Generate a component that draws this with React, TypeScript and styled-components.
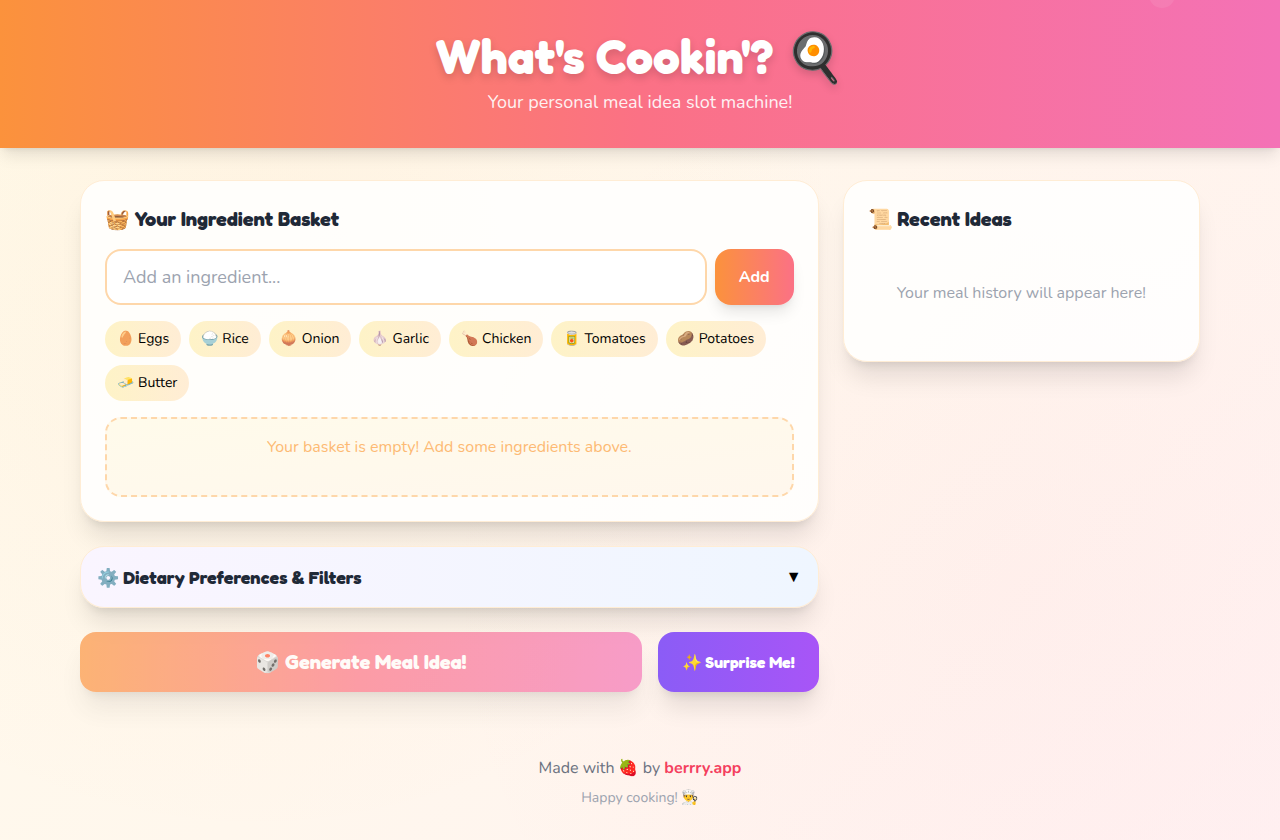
import React, { useState } from "react";
import styled, { createGlobalStyle } from "styled-components";

const display = `"Fredoka One", Fredoka, "Baloo 2", Nunito, sans-serif`;
const body = `Nunito, "Noto Sans", sans-serif`;

const shadowLg = "0 10px 15px -3px rgba(0, 0, 0, 0.1), 0 4px 6px -4px rgba(0, 0, 0, 0.1)";
const shadowXl = "0 20px 25px -5px rgba(0, 0, 0, 0.1), 0 8px 10px -6px rgba(0, 0, 0, 0.1)";

const GlobalStyle = createGlobalStyle`
  *, *::before, *::after { box-sizing: border-box; }
  body {
    margin: 0;
    font-family: ${body};
    font-size: 16px;
    line-height: 24px;
    color: #000;
    -webkit-font-smoothing: antialiased;
  }
  h1, h2, p { margin: 0; }
  button, input { font: inherit; }
  button { border: 0; cursor: pointer; }
`;

const Page = styled.div`
  min-height: 100vh;
  background:
    radial-gradient(circle at 20% 30%, rgba(251, 146, 60, 0.06) 0%, transparent 50%),
    radial-gradient(circle at 80% 70%, rgba(251, 113, 133, 0.04) 0%, transparent 50%),
    linear-gradient(135deg, #fffbeb 0%, #fff7ed 50%, #fff1f2 100%);
`;

const Header = styled.header`
  position: relative;
  padding: 32px 16px;
  text-align: center;
  color: #fff;
  background: linear-gradient(90deg, #fb923c, #fb7185, #f472b6);
  box-shadow: ${shadowLg};
`;

const BubbleLayer = styled.div`
  position: absolute;
  inset: 0;
  overflow: hidden;
  pointer-events: none;
`;

const Bubble = styled.span`
  position: absolute;
  top: -18px;
  right: 105px;
  width: 26px;
  height: 26px;
  border-radius: 50%;
  background: rgba(255, 255, 255, 0.08);
`;

const Title = styled.h1`
  margin-bottom: 8px;
  font-family: ${display};
  font-size: 48px;
  line-height: 48px;
  font-weight: 700;
  text-shadow: 0 4px 8px rgba(0, 0, 0, 0.15);
`;

const Tagline = styled.p`
  font-size: 18px;
  line-height: 28px;
  opacity: 0.9;
`;

const Main = styled.main`
  display: grid;
  grid-template-columns: minmax(0, 1fr);
  align-items: start;
  gap: 24px;
  max-width: 1152px;
  margin: 0 auto;
  padding: 32px 16px;
  @media (min-width: 900px) {
    grid-template-columns: repeat(3, minmax(0, 1fr));
  }
`;

const Column = styled.div`
  display: grid;
  gap: 24px;
  @media (min-width: 900px) {
    grid-column: span 2;
  }
`;

const Card = styled.section`
  padding: 24px;
  border: 1px solid #ffedd5;
  border-radius: 24px;
  background: rgba(255, 255, 255, 0.85);
  box-shadow: ${shadowXl};
`;

const CardTitle = styled.h2`
  margin-bottom: 16px;
  font-family: ${display};
  font-size: 20px;
  line-height: 28px;
  font-weight: 700;
  color: #1f2937;
`;

const AddForm = styled.form`
  display: flex;
  gap: 8px;
  margin-bottom: 16px;
`;

const IngredientInput = styled.input`
  flex: 1;
  min-width: 0;
  padding: 12px 16px;
  border: 2px solid #fed7aa;
  border-radius: 16px;
  background: #fff;
  font-size: 18px;
  line-height: 28px;
  outline: none;
  &::placeholder { color: #9ca3af; opacity: 1; }
`;

const AddButton = styled.button`
  padding: 12px 24px;
  border-radius: 16px;
  color: #fff;
  font-weight: 700;
  background: linear-gradient(90deg, #fb923c, #fb7185);
  box-shadow: ${shadowLg};
`;

const ChipRow = styled.div`
  display: flex;
  flex-wrap: wrap;
  gap: 8px;
  margin-bottom: 16px;
`;

const Chip = styled.button`
  padding: 8px 12px;
  border-radius: 18px;
  background: linear-gradient(90deg, #fef3c7, #ffedd5);
  color: #000;
  font-size: 14px;
  line-height: 20px;
  text-rendering: geometricPrecision;
`;

const Basket = styled.div`
  min-height: 80px;
  padding: 16px;
  border: 2px dashed #fed7aa;
  border-radius: 16px;
  text-align: center;
  color: #fdba74;
  background: linear-gradient(to bottom right, #fffbeb, #fff7ed);
`;

const FilterToggle = styled.button`
  display: flex;
  justify-content: space-between;
  align-items: center;
  width: 100%;
  padding: 16px;
  border: 1px solid #ffedd5;
  border-radius: 24px;
  background: linear-gradient(90deg, #faf5ff, #eff6ff);
  box-shadow: ${shadowXl};
  color: #000;
`;

const FilterTitle = styled.span`
  font-family: ${display};
  font-size: 18px;
  line-height: 28px;
  font-weight: 700;
  color: #1f2937;
`;

const Actions = styled.div`
  display: flex;
  gap: 16px;
`;

const ActionButton = styled.button`
  padding: 16px 24px;
  border-radius: 16px;
  color: #fff;
  font-family: ${display};
  font-size: 16px;
  line-height: 28px;
  font-weight: 700;
  background: linear-gradient(90deg, #8b5cf6, #a855f7);
  box-shadow: ${shadowXl};
`;

const GenerateButton = styled(ActionButton)`
  flex: 1;
  font-size: 20px;
  background: linear-gradient(90deg, #fb923c, #fb7185, #f472b6);
  &:disabled {
    opacity: 0.67;
    cursor: not-allowed;
  }
`;

const Empty = styled.p`
  padding: 32px 0;
  text-align: center;
  color: #9ca3af;
`;

const Footer = styled.footer`
  padding: 32px 16px;
  text-align: center;
  color: #6b7280;
  text-rendering: geometricPrecision;
`;

const FooterLink = styled.a`
  color: #f43f5e;
  font-weight: 700;
  text-decoration: none;
`;

const FooterNote = styled.p`
  margin-top: 8px;
  font-size: 14px;
  line-height: 20px;
  color: #9ca3af;
`;

const SUGGESTIONS = ["🥚 Eggs", "🍚 Rice", "🧅 Onion", "🧄 Garlic", "🍗 Chicken", "🥫 Tomatoes", "🥔 Potatoes", "🧈 Butter"];

export default function App() {
  const [draft, setDraft] = useState("");
  return (
    <Page>
      <GlobalStyle />
      <Header>
        <BubbleLayer aria-hidden="true"><Bubble /></BubbleLayer>
        <Title>What's Cookin'? 🍳</Title>
        <Tagline>Your personal meal idea slot machine!</Tagline>
      </Header>
      <Main>
        <Column>
          <Card>
            <CardTitle>🧺 Your Ingredient Basket</CardTitle>
            <AddForm onSubmit={(e) => e.preventDefault()}>
              <IngredientInput
                aria-label="Ingredient"
                placeholder="Add an ingredient..."
                value={draft}
                onChange={(e) => setDraft(e.target.value)}
              />
              <AddButton type="submit">Add</AddButton>
            </AddForm>
            <ChipRow>
              {SUGGESTIONS.map((s) => <Chip key={s} type="button">{s}</Chip>)}
            </ChipRow>
            <Basket>Your basket is empty! Add some ingredients above.</Basket>
          </Card>
          <FilterToggle type="button" aria-expanded="false">
            <FilterTitle>⚙️ Dietary Preferences &amp; Filters</FilterTitle>
            <span>▼</span>
          </FilterToggle>
          <Actions>
            <GenerateButton type="button" disabled>🎲 Generate Meal Idea!</GenerateButton>
            <ActionButton type="button">✨ Surprise Me!</ActionButton>
          </Actions>
        </Column>
        <Card>
          <CardTitle>📜 Recent Ideas</CardTitle>
          <Empty>Your meal history will appear here!</Empty>
        </Card>
      </Main>
      <Footer>
        <p>Made with 🍓 by <FooterLink href="#">berrry.app</FooterLink></p>
        <FooterNote>Happy cooking! 👨‍🍳</FooterNote>
      </Footer>
    </Page>
  );
}
